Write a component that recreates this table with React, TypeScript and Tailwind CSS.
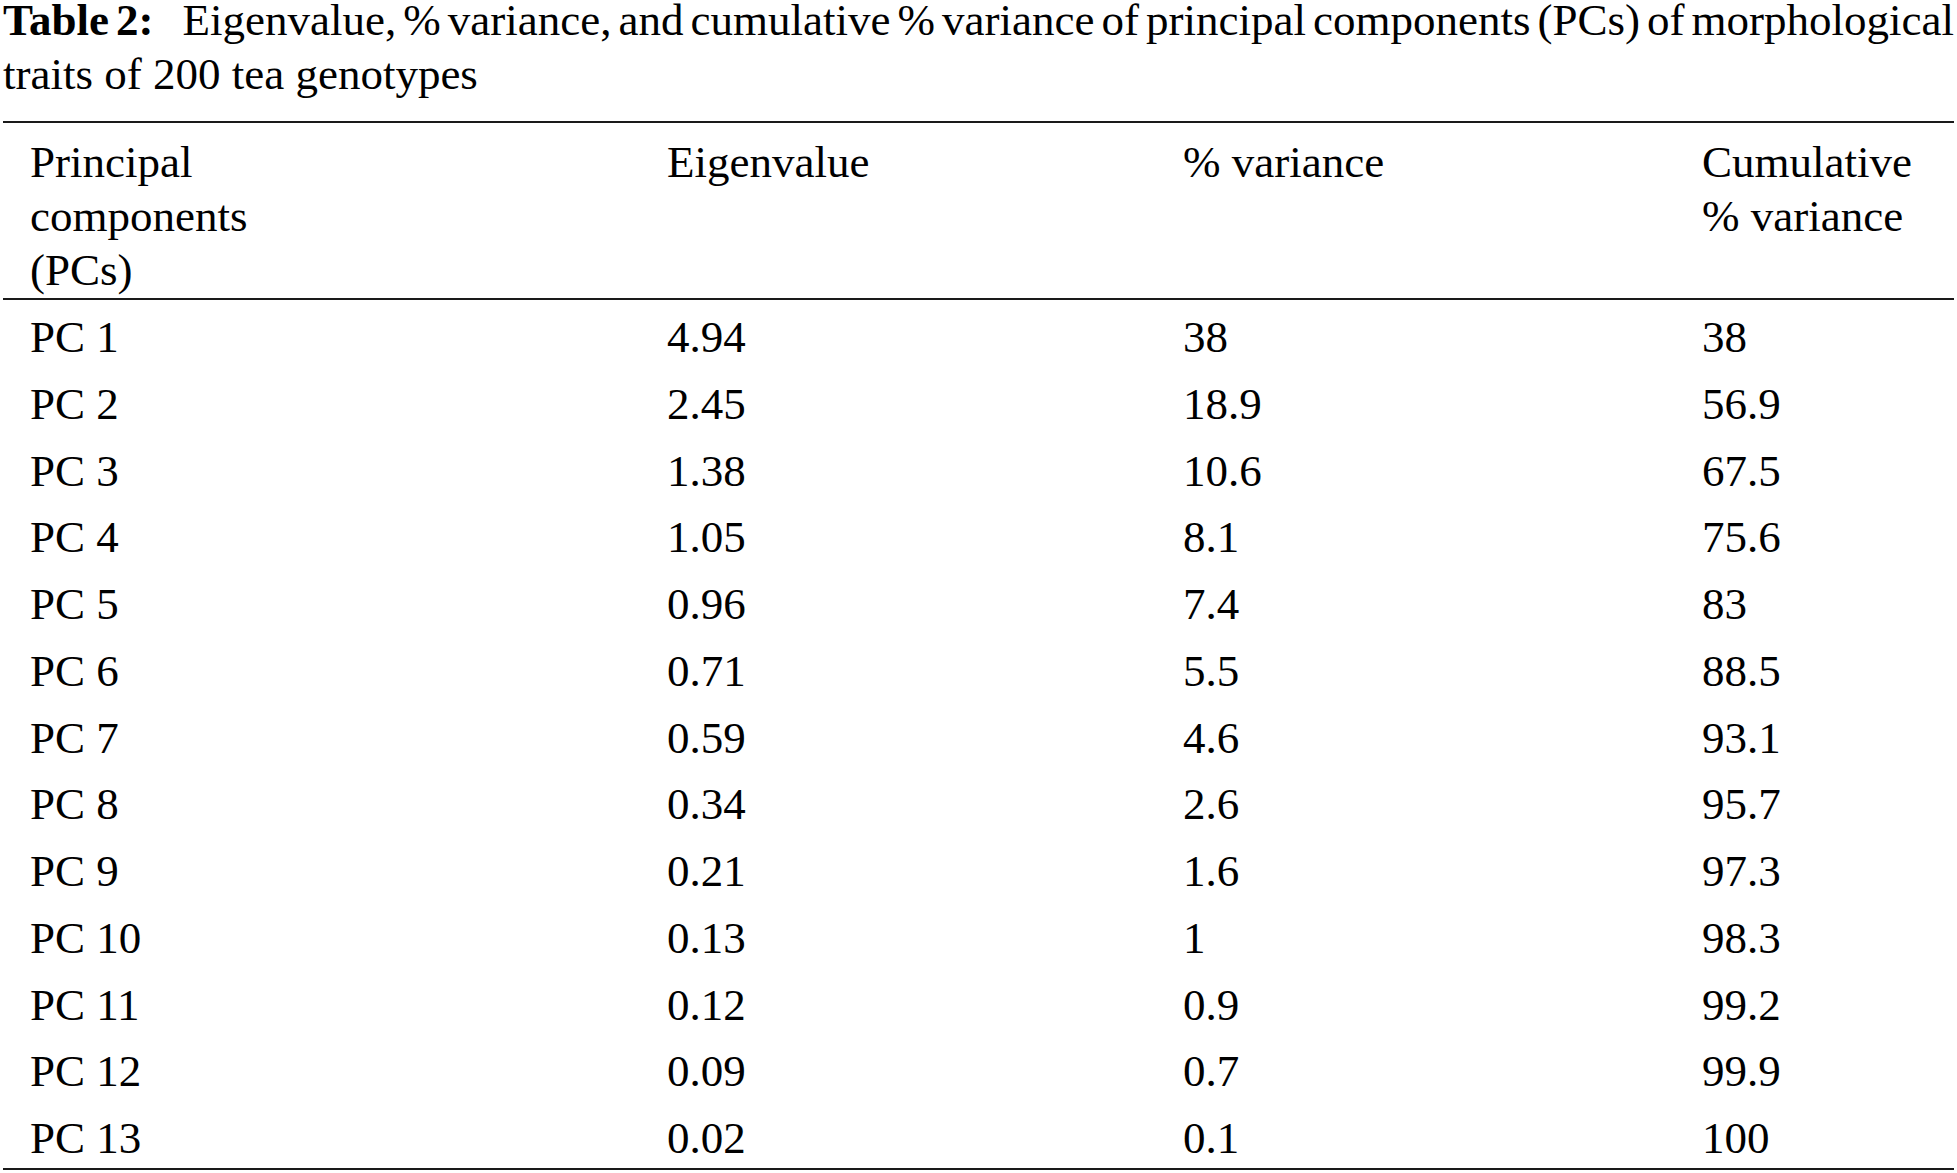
import React from "react";

const rows = [
  ["PC 1", "4.94", "38", "38"],
  ["PC 2", "2.45", "18.9", "56.9"],
  ["PC 3", "1.38", "10.6", "67.5"],
  ["PC 4", "1.05", "8.1", "75.6"],
  ["PC 5", "0.96", "7.4", "83"],
  ["PC 6", "0.71", "5.5", "88.5"],
  ["PC 7", "0.59", "4.6", "93.1"],
  ["PC 8", "0.34", "2.6", "95.7"],
  ["PC 9", "0.21", "1.6", "97.3"],
  ["PC 10", "0.13", "1", "98.3"],
  ["PC 11", "0.12", "0.9", "99.2"],
  ["PC 12", "0.09", "0.7", "99.9"],
  ["PC 13", "0.02", "0.1", "100"],
];

const cols = "grid grid-cols-[637px_516px_519px_1fr]";

export default function App() {
  return (
    <div className="flex flex-col w-[1957px] h-[1173px] overflow-hidden bg-white text-black font-['Liberation_Serif','Times_New_Roman',serif]">
      {/* Caption */}
      <div className="mx-[3px] text-[45px]">
        <p className="leading-[40px] whitespace-nowrap [word-spacing:-5px] text-justify [text-align-last:justify]">
          <b className="mr-[8px]">Table 2:</b>&nbsp;&nbsp; Eigenvalue, % variance, and cumulative % variance of principal
          components (PCs) of morphological
        </p>
        <p className="leading-[68px] whitespace-nowrap">traits of 200 tea&nbsp;genotypes</p>
      </div>

      {/* Table */}
      <div className="mx-[3px] mt-[13px] border-t-2 border-b-2 border-[#1a1a1a] text-[45px]">
        <div className={`${cols} border-b-2 border-[#1a1a1a] pt-[12px] pb-[1px] leading-[54px]`}>
          <div className="pl-[27px]">
            Principal
            <br />
            components
            <br />
            (PCs)
          </div>
          <div className="pl-[27px]">Eigenvalue</div>
          <div className="pl-[27px]">% variance</div>
          <div className="pl-[27px]">
            Cumulative
            <br />% variance
          </div>
        </div>

        {rows.map((r) => (
          <div key={r[0]} className={`${cols} h-[66.75px] pt-[9px] leading-[57.75px]`}>
            {r.map((c, i) => (
              <div key={i} className="pl-[27px] whitespace-nowrap">
                {c}
              </div>
            ))}
          </div>
        ))}
      </div>
    </div>
  );
}
